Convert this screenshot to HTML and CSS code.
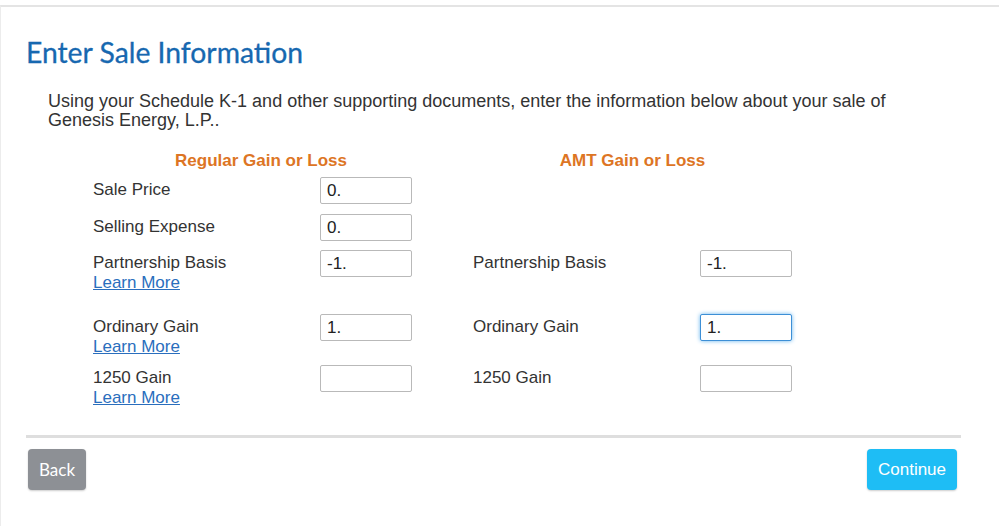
FILE: index.html
```html
<!DOCTYPE html>
<html lang="en">
<head>
    <meta charset="UTF-8" />
    <title>Enter Sale Information</title>
    <link rel="stylesheet" href="styles.css">
</head>
<body>
    <div class="page">
        <h1>Enter Sale Information</h1>

        <p class="intro">Using your Schedule K-1 and other supporting documents, enter the information below about your sale of Genesis Energy, L.P..</p>

        <table class="sale-table">
            <thead>
                <tr>
                    <th colspan="2" class="col-head">Regular Gain or Loss</th>
                    <th colspan="2" class="col-head amt">AMT Gain or Loss</th>
                </tr>
            </thead>
            <tbody>
                <tr class="first">
                    <td class="lbl">Sale Price</td>
                    <td class="fld"><input type="text" value="0." /></td>
                    <td class="lbl amt"></td>
                    <td class="fld"></td>
                </tr>
                <tr>
                    <td class="lbl">Selling Expense</td>
                    <td class="fld"><input type="text" value="0." /></td>
                    <td class="lbl amt"></td>
                    <td class="fld"></td>
                </tr>
                <tr class="wide">
                    <td class="lbl">Partnership Basis<br><a href="#">Learn More</a></td>
                    <td class="fld"><input type="text" value="-1." /></td>
                    <td class="lbl amt">Partnership Basis</td>
                    <td class="fld"><input type="text" value="-1." /></td>
                </tr>
                <tr class="tight">
                    <td class="lbl">Ordinary Gain<br><a href="#">Learn More</a></td>
                    <td class="fld"><input type="text" value="1." /></td>
                    <td class="lbl amt">Ordinary Gain</td>
                    <td class="fld"><input type="text" value="1." class="focused" /></td>
                </tr>
                <tr>
                    <td class="lbl">1250 Gain<br><a href="#">Learn More</a></td>
                    <td class="fld"><input type="text" value="" /></td>
                    <td class="lbl amt">1250 Gain</td>
                    <td class="fld"><input type="text" value="" /></td>
                </tr>
            </tbody>
        </table>

        <div class="footer">
            <button class="btn back">Back</button>
            <button class="btn continue">Continue</button>
        </div>
    </div>
</body>
</html>
```

FILE: styles.css
```css
body {
    margin: 0;
    background: #fff;
    font-family: Arial, "Liberation Sans", sans-serif;
    color: #333;
}

.page {
    margin-top: 5px;
    border-top: 2px solid #e4e4e4;
    border-left: 1px solid #ececec;
    height: 519px;
    padding: 0 38px 0 25px;
}

h1 {
    font-family: Lato, "Open Sans", sans-serif;
    font-weight: 400;
    font-size: 28.3px;
    color: #1768b0;
    margin: 29px 0 0 0;
    line-height: 32px;
    -webkit-text-stroke: 0.3px #1768b0;
}

.intro {
    font-size: 18px;
    line-height: 19px;
    margin: 24px 0 0 22px;
    width: 880px;
}

.sale-table {
    border-collapse: collapse;
    margin: 21px 0 0 67px;
}

.col-head {
    color: #dd7524;
    font-size: 17px;
    font-weight: bold;
    text-align: center;
    padding: 0 0 6px 0;
    line-height: 20px;
}

.col-head.amt {
    padding-left: 44px;
}

td {
    vertical-align: top;
    padding: 0 0 9px 0;
    font-size: 17px;
}

tr.first td {
    padding-bottom: 10px;
}

.lbl {
    width: 227px;
    line-height: 20px;
    padding-top: 3px;
}

.lbl.amt {
    padding-left: 44px;
}

.fld {
    width: 92px;
}

.sale-table td.fld:nth-child(2) {
    width: 109px;
}

tr.wide td {
    padding-bottom: 24px;
}

tr.wide td.lbl {
    padding-bottom: 21px;
}

tr.tight td {
    padding-bottom: 8px;
}

tr.tight td.lbl {
    padding-bottom: 8px;
}

a {
    color: #2a6ebd;
    text-decoration: underline;
}

input[type="text"] {
    box-sizing: border-box;
    width: 92px;
    height: 27px;
    border: 1px solid #b9b9b9;
    border-radius: 2px;
    padding: 0 6px;
    font-family: Arial, "Liberation Sans", sans-serif;
    font-size: 17px;
    color: #222;
    margin: 0;
}

input.focused {
    border: 1px solid #3d8fd6;
    box-shadow: 0 0 4px #66b5ef;
}

.footer {
    border-top: 3px solid #dedede;
    margin-top: 18px;
    display: flex;
    justify-content: space-between;
    padding: 11px 4px 0 2px;
}

.btn {
    height: 41px;
    border: none;
    border-radius: 4px;
    color: #fff;
    font-size: 17px;
    cursor: pointer;
    box-shadow: 0 1px 2px rgba(0, 0, 0, 0.2);
}

.btn.back {
    background: #8d9095;
    width: 58px;
    font-family: Lato, "Open Sans", sans-serif;
}

.btn.continue {
    background: #1ebdf5;
    width: 90px;
    font-family: Arial, "Liberation Sans", sans-serif;
}
```
